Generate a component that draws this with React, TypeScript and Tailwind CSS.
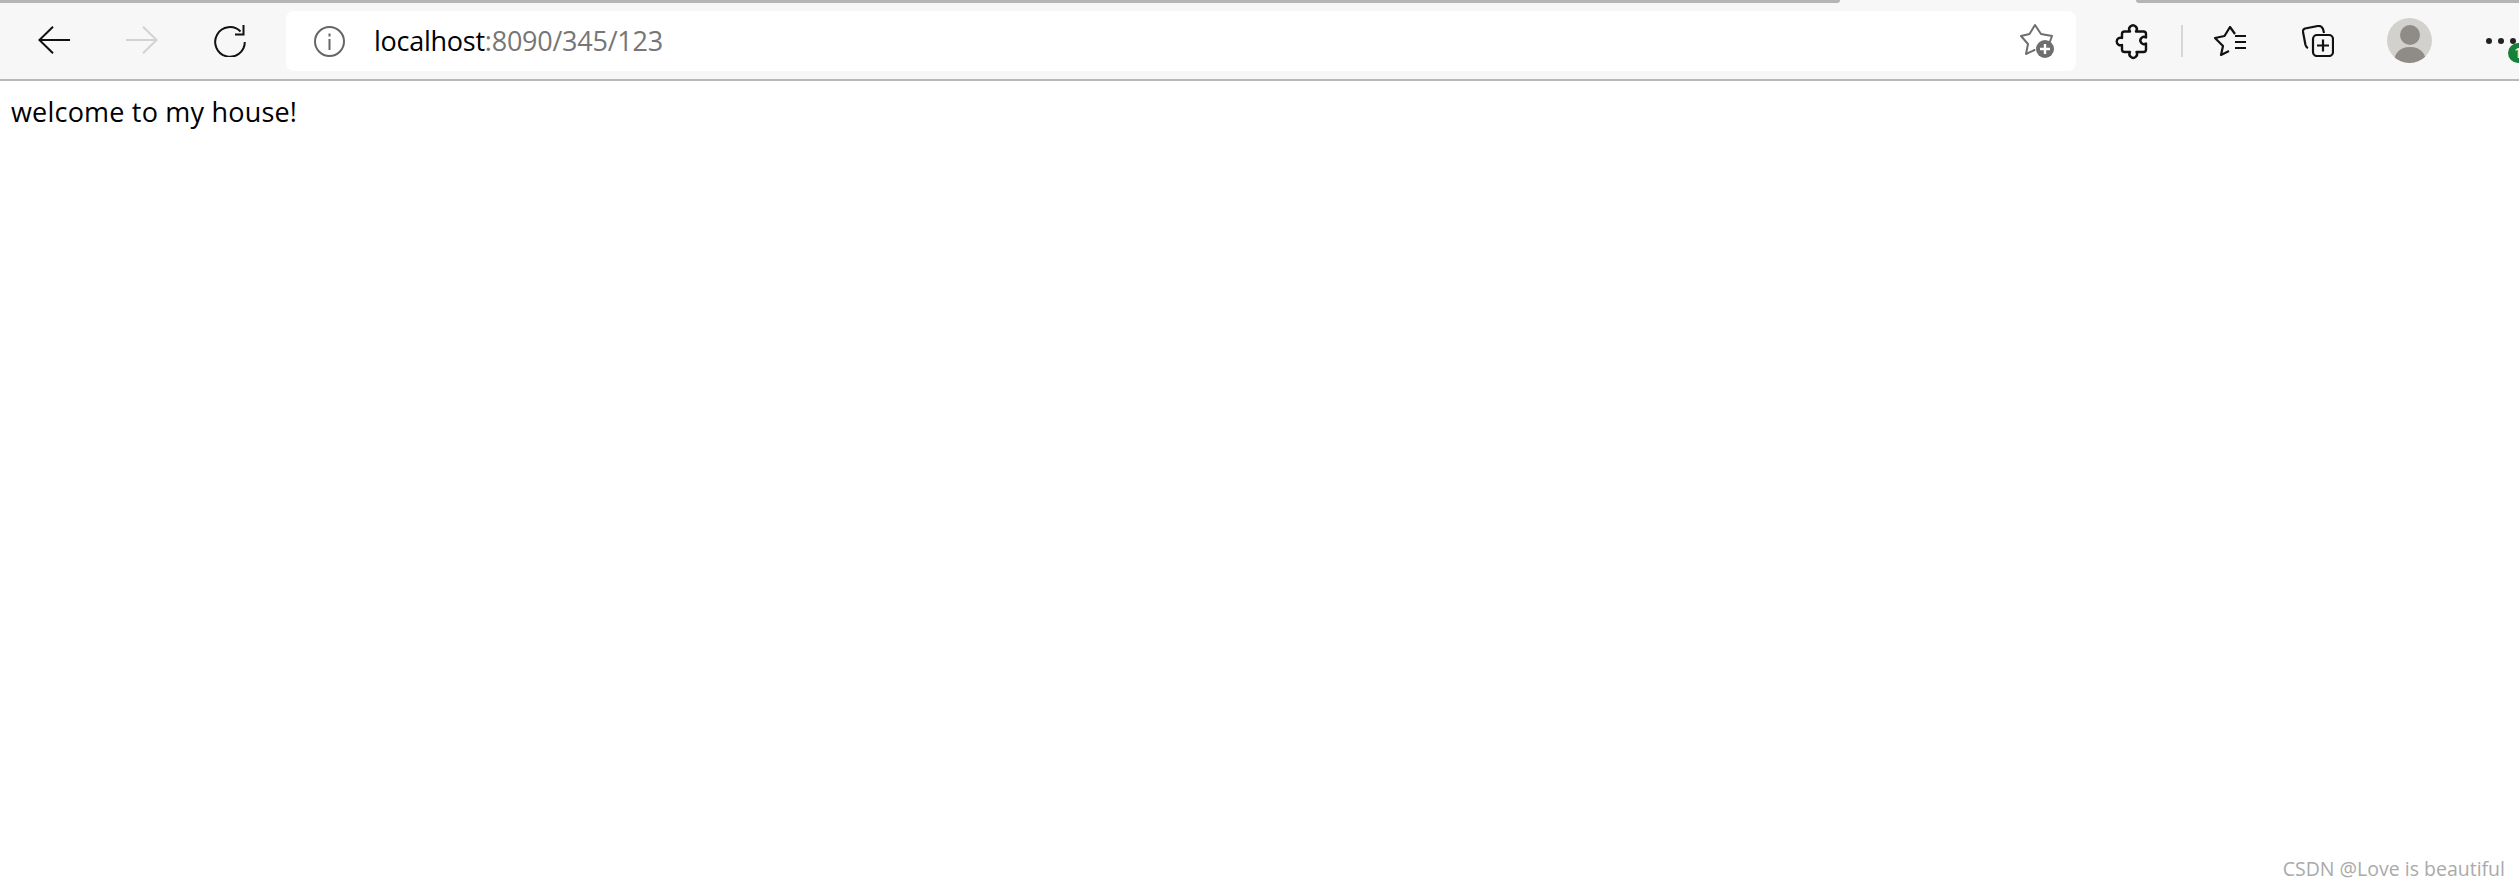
import React from "react";

export default function App() {
  return (
    <div className="relative flex h-[887px] w-[2519px] flex-col overflow-hidden bg-white font-['Open_Sans',sans-serif]">
      <div className="flex h-[3px] bg-[#f7f7f7]">
        <div className="h-full w-[1840px] rounded-br-[4px] bg-[#b5b5b5]" />
        <div className="w-[296px]" />
        <div className="h-full flex-1 rounded-bl-[4px] bg-[#b5b5b5]" />
      </div>
      <header className="flex h-[78px] items-start border-b-[2px] border-[#b8b8b8] bg-[#f7f7f7] pl-[38px]">
        <svg className="mt-[23px]" width="32" height="28" viewBox="0 0 32 28" fill="none" stroke="#111111" strokeWidth="2">
          <path d="M1 14H32M15 0.7L1.4 14L15 27.3" />
        </svg>
        <svg className="ml-[56px] mt-[23px]" width="32" height="28" viewBox="0 0 32 28" fill="none" stroke="#d2d2d2" strokeWidth="2">
          <path d="M0 14H31M17 0.7L30.6 14L17 27.3" />
        </svg>
        <svg className="ml-[56px] mt-[22px]" width="32" height="32" viewBox="0 0 32 32" fill="none" stroke="#111111" strokeWidth="2">
          <path d="M26.5 6.5A14.8 14.8 0 1 0 30.8 17" />
          <path d="M21 9.5H29.5V0" />
        </svg>
        <div className="ml-[40px] mt-[8px] flex h-[60px] w-[1790px] items-center rounded-[8px] bg-white pl-[28px] pr-[22px]">
          <svg width="31" height="31" viewBox="0 0 31 31" fill="none" stroke="#666666" strokeWidth="2">
            <circle cx="15.5" cy="15.5" r="14.5" />
            <path d="M15.5 13V24M15.5 7.5V10.5" />
          </svg>
          <div className="ml-[29px] text-[27px] tracking-[-0.25px] text-black">
            localhost<span className="text-[#767676]">:8090/345/123</span>
          </div>
          <svg className="ml-auto" width="34" height="34" viewBox="0 0 34 34" fill="none">
            <path d="M30 17.5L32 12L21 10L15 1L9.5 10L1 12L8 20L6 30L14.5 26" stroke="#6e6e6e" strokeWidth="2" strokeLinejoin="round" strokeLinecap="round" />
            <circle cx="25" cy="25" r="9" fill="#6e6e6e" />
            <path d="M25 20V30M20 25H30" stroke="#ffffff" strokeWidth="2.4" />
          </svg>
        </div>
        <svg className="ml-[42px] mt-[22px] overflow-visible" width="29" height="31" viewBox="0 0 29 31" fill="none" stroke="#111111" strokeWidth="2.4" strokeLinejoin="round">
          <path d="M12 6.5A3.8 3.8 0 1 1 18 6.5H25.5C27 6.5 28 7.5 28 9V12.5A3.6 3.6 0 1 0 28 18.5V24.5C28 26 27 27 25.5 27H18.5A3.8 3.8 0 1 1 12 27H6.5C5 27 4 26 4 24.5V20A3.8 3.8 0 1 1 4 13V9C4 7.5 5 6.5 6.5 6.5Z" />
        </svg>
        <div className="ml-[34px] mt-[22px] h-[32px] w-[2px] bg-[#d6d6d6]" />
        <svg className="ml-[31px] mt-[23px]" width="32" height="30" viewBox="0 0 32 30" fill="none" stroke="#111111" strokeWidth="2.2" strokeLinejoin="round">
          <path d="M21 8L16 1L10.5 10L1 12L9 20L7 29L15 25" />
          <path d="M21 10H32M21 16H32M21 22H32" />
        </svg>
        <svg className="ml-[56px] mt-[22px]" width="32" height="32" viewBox="0 0 32 32" fill="none" stroke="#111111" strokeWidth="2.2" strokeLinejoin="round">
          <path d="M6 23C4.5 22.5 4 21.5 3.5 20L1 7C0.7 5 1.5 4 3 3.5L16 1C18.5 0.7 20 1.5 21 4L22 8" />
          <rect x="11" y="10" width="20" height="21" rx="4" />
          <path d="M21 14.5V26.5M15 20.5H27" />
        </svg>
        <div className="ml-[53px] mt-[15px] h-[45px] w-[45px] overflow-hidden rounded-full bg-[#d2d1cd]">
          <svg width="45" height="45" viewBox="0 0 45 45">
            <circle cx="23" cy="17" r="10" fill="#8f8b87" />
            <path d="M7 45C7 35 13 29 23 29C33 29 39 35 39 45Z" fill="#8f8b87" />
          </svg>
        </div>
        <div className="relative ml-[54px] mt-[35px] flex gap-[6px]">
          <div className="h-[6px] w-[6px] rounded-full bg-[#222222]" />
          <div className="h-[6px] w-[6px] rounded-full bg-[#222222]" />
          <div className="h-[6px] w-[6px] rounded-full bg-[#222222]" />
          <div className="absolute left-[22px] top-[5px] flex h-[20px] w-[20px] items-center justify-center rounded-full bg-[#178038] text-[14px] leading-none text-white">
            1
          </div>
        </div>
      </header>
      <main className="pl-[11px] pt-[13px] text-[27px] leading-[36px] tracking-[0.2px] text-black">
        welcome to my house!
      </main>
      <div className="absolute bottom-[5px] right-[14px] text-[19.5px] leading-[26px] text-[#aaaaaa]">
        CSDN @Love is beautiful
      </div>
    </div>
  );
}
